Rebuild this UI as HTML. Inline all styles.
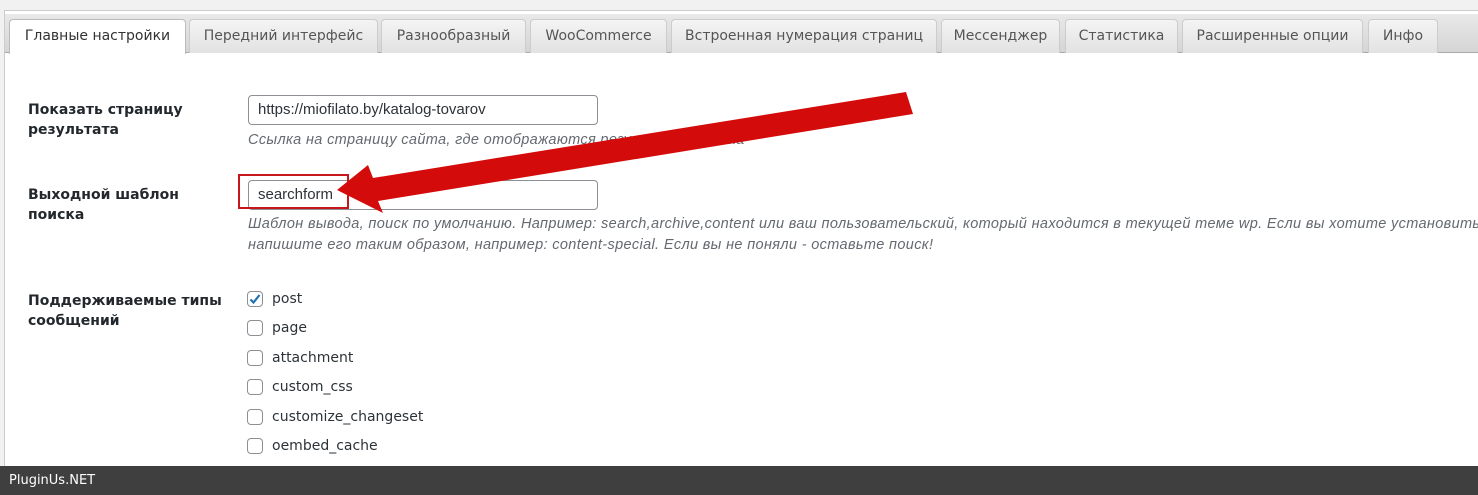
<!DOCTYPE html>
<html><head><meta charset="utf-8"><style>
*{box-sizing:border-box;margin:0;padding:0}
body{width:1478px;height:495px;overflow:hidden;background:#f1f1f1;position:relative;font-family:"DejaVu Sans",sans-serif;color:#23282d}
.panel{position:absolute;left:4px;top:10px;width:1480px;height:470px;background:#fff;border:1px solid #ccc}
.bar{position:absolute;left:5px;top:14px;width:1473px;height:39px;background:linear-gradient(#e9e9e9,#d5d5d5);border-bottom:1px solid #aaa}
.tab{position:absolute;top:19px;height:34px;background:linear-gradient(#f4f4f4,#e2e2e2);border:1px solid #ccc;border-bottom:none;border-radius:4px 4px 0 0;font-size:14px;color:#555;text-align:center;line-height:33px;white-space:nowrap}
.tab.act{background:#fff;color:#333;height:35px;border-color:#bbb}
.lbl{position:absolute;left:28px;font-weight:bold;font-size:14px;line-height:20px;color:#23282d}
.inp{position:absolute;left:248px;width:350px;height:30px;border:1px solid #8c8f94;border-radius:4px;background:#fff;font-family:"Liberation Sans",sans-serif;font-size:15px;padding-left:9px;line-height:28px;color:#2c3338}
.desc{position:absolute;left:248px;font-family:"Liberation Sans",sans-serif;font-style:italic;font-size:14.5px;color:#646970;line-height:21px;white-space:nowrap;letter-spacing:.35px}
.cb{position:absolute;left:247px;width:16px;height:16px;border:1px solid #8c8f94;border-radius:4px;background:#fff}
.cl{position:absolute;left:272px;font-size:14px;color:#2c3338}
.foot{position:absolute;left:0;top:466px;width:1478px;height:29px;background:#3f3f3f;color:#fff;font-size:13px;line-height:29px;padding-left:9px}
</style></head><body>
<div class="panel"></div>
<div class="bar"></div>
<div class="tab act" style="left:9px;width:177px">Главные настройки</div>
<div class="tab" style="left:189px;width:189px">Передний интерфейс</div>
<div class="tab" style="left:381px;width:145px">Разнообразный</div>
<div class="tab" style="left:530px;width:137px">WooCommerce</div>
<div class="tab" style="left:671px;width:266px">Встроенная нумерация страниц</div>
<div class="tab" style="left:941px;width:119px">Мессенджер</div>
<div class="tab" style="left:1065px;width:113px">Статистика</div>
<div class="tab" style="left:1182px;width:181px">Расширенные опции</div>
<div class="tab" style="left:1368px;width:70px">Инфо</div>

<div class="lbl" style="top:100px">Показать страницу<br>результата</div>
<div class="inp" style="top:95px">https://miofilato.by/katalog-tovarov</div>
<div class="desc" style="top:130px">Ссылка на страницу сайта, где отображаются результаты поиска</div>

<div class="lbl" style="top:185px">Выходной шаблон<br>поиска</div>
<div class="inp" style="top:180px">searchform</div>
<div style="position:absolute;left:238px;top:174px;width:111px;height:35px;border:2px solid #c8161d"></div>
<div class="desc" style="top:214px">Шаблон вывода, поиск по умолчанию. Например: search,archive,content или ваш пользовательский, который находится в текущей теме wp. Если вы хотите установить</div>
<div class="desc" style="top:235px">напишите его таким образом, например: content-special. Если вы не поняли - оставьте поиск!</div>

<div class="lbl" style="top:291px">Поддерживаемые типы<br>сообщений</div>
<div class="cb" style="top:291px"><svg width="14" height="14" viewBox="0 0 14 14" style="position:absolute;left:0;top:0"><path d="M2.5 7.5 L5.5 10.5 L11.5 3" stroke="#2271b1" stroke-width="2.2" fill="none"/></svg></div>
<div class="cl" style="top:291px">post</div>
<div class="cb" style="top:320px"></div><div class="cl" style="top:320px">page</div>
<div class="cb" style="top:350px"></div><div class="cl" style="top:350px">attachment</div>
<div class="cb" style="top:379px"></div><div class="cl" style="top:379px">custom_css</div>
<div class="cb" style="top:409px"></div><div class="cl" style="top:409px">customize_changeset</div>
<div class="cb" style="top:438px"></div><div class="cl" style="top:438px">oembed_cache</div>

<svg width="1478" height="495" style="position:absolute;left:0;top:0">
<polygon points="906,92 913,114 378,201 383,213 337,190 368,165 373,178" fill="#d40b0b"/>
</svg>
<div class="foot">PluginUs.NET</div>
</body></html>
